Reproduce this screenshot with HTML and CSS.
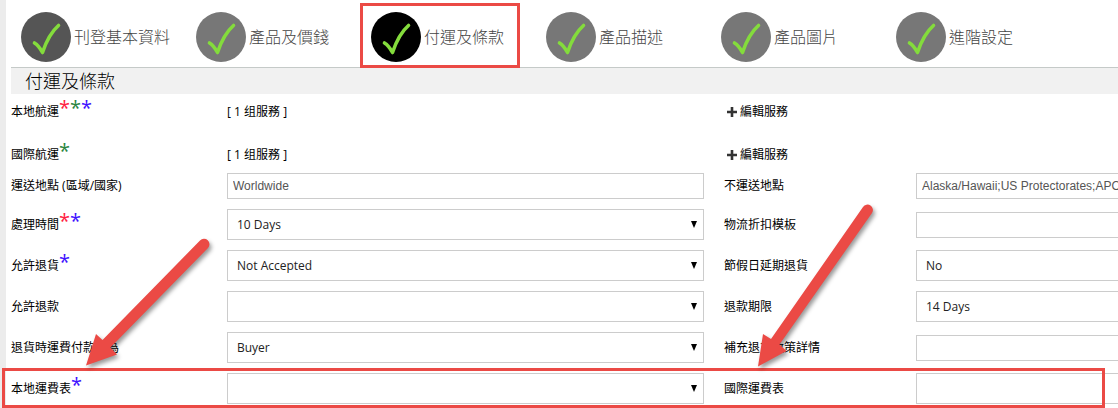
FILE: index.html
```
<!DOCTYPE html>
<html lang="zh-Hant">
<head>
<meta charset="utf-8">
<title>付運及條款</title>
<link rel="stylesheet" href="styles.css">
</head>
<body>
<svg class="defs" width="0" height="0">
  <symbol id="tick" viewBox="0 0 50 50">
    <path d="M13.500 31C17 33 19 36 21.500 40.500C25 30 30 20 37.500 13.500" fill="none" stroke="#84dc3c" stroke-width="3.600" stroke-linecap="round" stroke-linejoin="round"/>
  </symbol>
  <symbol id="plus" viewBox="0 0 10 10">
    <path d="M0 5H10M5 0V10" stroke="#333" stroke-width="2.600"/>
  </symbol>
</svg>

<div class="main">
  <nav class="steps">
    <a class="step done" href="#"><svg class="tick"><use href="#tick"/></svg>刊登基本資料</a>
    <a class="step" href="#"><svg class="tick"><use href="#tick"/></svg>產品及價錢</a>
    <a class="step current" href="#"><svg class="tick"><use href="#tick"/></svg>付運及條款</a>
    <a class="step" href="#"><svg class="tick"><use href="#tick"/></svg>產品描述</a>
    <a class="step" href="#"><svg class="tick"><use href="#tick"/></svg>產品圖片</a>
    <a class="step" href="#"><svg class="tick"><use href="#tick"/></svg>進階設定</a>
  </nav>
  <h1>付運及條款</h1>

  <form class="terms">
    <div class="row service">
      <span>本地航運<sup class="red">*</sup><sup class="green">*</sup><sup class="blue">*</sup></span>
      <span>[ 1 组服務 ]</span>
      <button type="button" class="edit"><svg class="plus"><use href="#plus"/></svg>編輯服務</button>
    </div>
    <div class="row service">
      <span>國際航運<sup class="green">*</sup></span>
      <span>[ 1 组服務 ]</span>
      <button type="button" class="edit"><svg class="plus"><use href="#plus"/></svg>編輯服務</button>
    </div>
    <div class="row">
      <label for="shipto">運送地點 (區域/國家)</label>
      <input type="text" id="shipto" value="Worldwide">
      <label for="exclude">不運送地點</label>
      <input type="text" id="exclude" value="Alaska/Hawaii;US Protectorates;APO/FPO">
    </div>
    <div class="row">
      <label for="handling">處理時間<sup class="red">*</sup><sup class="blue">*</sup></label>
      <div class="select"><select id="handling"><option>10 Days</option></select></div>
      <label for="discount">物流折扣模板</label>
      <input type="text" id="discount">
    </div>
    <div class="row">
      <label for="returns">允許退貨<sup class="blue">*</sup></label>
      <div class="select"><select id="returns"><option>Not Accepted</option></select></div>
      <label for="holiday">節假日延期退貨</label>
      <div class="select"><select id="holiday"><option>No</option></select></div>
    </div>
    <div class="row">
      <label for="refund">允許退款</label>
      <div class="select"><select id="refund"><option></option></select></div>
      <label for="within">退款期限</label>
      <div class="select"><select id="within"><option>14 Days</option></select></div>
    </div>
    <div class="row">
      <label for="payer">退貨時運費付款人為</label>
      <div class="select"><select id="payer"><option>Buyer</option></select></div>
      <label for="policy">補充退貨政策詳情</label>
      <input type="text" id="policy">
    </div>
    <div class="row marked">
      <label for="local">本地運費表<sup class="blue">*</sup></label>
      <div class="select"><select id="local"><option></option></select></div>
      <label for="intl">國際運費表</label>
      <div class="select"><select id="intl"><option></option></select></div>
    </div>
  </form>
</div>

<!-- arrows pointing at the rate table row -->
<svg class="arrows" width="900" height="400" viewBox="0 0 900 400">
  <path d="M86 365.500L96 334L102.500 340L200 240.500A5.400 5.400 0 0 1 208 248L110.500 347.500L117 354.500Z"/>
  <path d="M758 366.500L763 334L771 339L863 207A5.400 5.400 0 0 1 872 213L779.500 344.500L786.500 351Z"/>
</svg>
</body>
</html>
```

FILE: styles.css
```
body {
  margin: 0;
  position: relative;
  color: #000;
  font: 12px/18px "Open Sans", "Noto Sans CJK TC", sans-serif;
}

.defs {
  position: absolute;
}

/* grey strip down the left side */
.main {
  padding: 12px 0 4px 11px;
  background: linear-gradient(to right, #ececec 6px, #fff 6px);
  overflow: hidden;
}

/* wizard steps */
.steps {
  display: flex;
  padding: 0 0 5px 10px;
  border-bottom: 1px solid #c5cac8;
}

.step {
  position: relative;
  display: flex;
  align-items: center;
  flex: none;
  width: 175px;
  color: #444;
  font-size: 16px;
  font-weight: 300;
  text-decoration: none;
}

.tick {
  width: 50px;
  height: 50px;
  margin-right: 3px;
  border-radius: 50%;
  background: #777;
}

.done .tick {
  background: #555;
}

.current .tick {
  background: #000;
}

h1 {
  margin: 0;
  padding-left: 14px;
  background: #f1f1f1;
  font-size: 18px;
  font-weight: 300;
  line-height: 26px;
}

/* form */
.terms {
  display: flex;
  flex-direction: column;
  gap: 10px;
  padding-top: 9px;
}

.row {
  position: relative;
  display: grid;
  grid-template-columns: 216px 497px 192px 477px;
  align-items: center;
}

.row > :nth-child(2) {
  margin-right: 20px;
}

.service + .service {
  padding-top: 15px;
  margin-bottom: -1px;
}

sup {
  font-size: 20px;
  line-height: 0;
  vertical-align: 1px;
}

.red {
  color: #ff2040;
}

.green {
  color: #2a8540;
}

.blue {
  color: #4010ff;
}

.edit {
  display: flex;
  align-items: center;
  gap: 3px;
  padding: 0 0 0 3px;
  border: 0;
  background: none;
  color: #000;
  font: inherit;
}

.plus {
  width: 10px;
  height: 10px;
}

input {
  box-sizing: border-box;
  height: 26px;
  padding: 0 5px;
  border: 1px solid #ccc;
  background: #fff;
  color: #555;
  font: 12px "Liberation Sans", Arial, sans-serif;
}

.select {
  position: relative;
}

.select::after {
  content: "";
  position: absolute;
  top: 12px;
  right: 7px;
  border: solid transparent;
  border-width: 7px 3px 0;
  border-top-color: #000;
}

select {
  display: block;
  box-sizing: border-box;
  width: 100%;
  height: 31px;
  padding: 0 9px;
  border: 1px solid #ccc;
  border-radius: 0;
  background: #fff;
  color: #222;
  font: inherit;
  appearance: none;
}

/* red markup */
.current::after,
.marked::after {
  content: "";
  position: absolute;
  border: 3px solid #eb4a45;
}

.current::after {
  top: -9px;
  right: 26px;
  bottom: -6px;
  left: -11px;
}

.marked::after {
  top: -5px;
  right: 13px;
  bottom: -4px;
  left: -9px;
}

.arrows {
  position: absolute;
  top: 0;
  left: 0;
  fill: #eb4a45;
  filter: drop-shadow(2px 3px 2px rgba(0, 0, 0, .4));
  pointer-events: none;
}
```
